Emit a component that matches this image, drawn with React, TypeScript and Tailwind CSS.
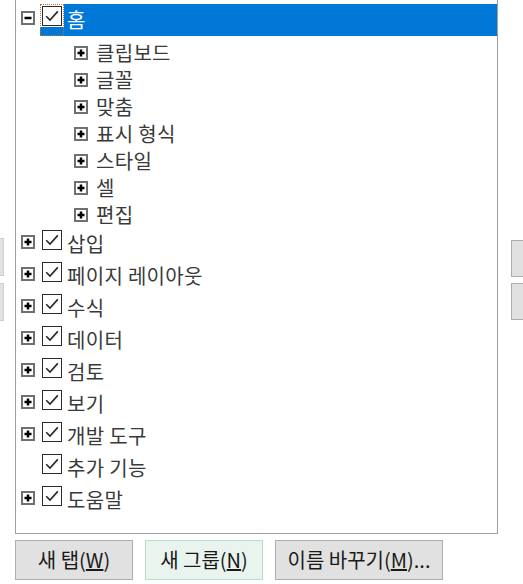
import React from "react";

const FONT = { fontFamily: '"Noto Sans CJK KR", "Noto Sans", sans-serif' };

const Expander = ({ minus }: { minus?: boolean }) => (
  <svg width="14" height="14" viewBox="0 0 14 14" className="shrink-0 block">
    <rect x="1" y="1" width="12" height="12" fill="#fff" stroke="#707070" strokeWidth="2" />
    <rect x="3.5" y="5.75" width="7" height="2.5" fill="#000" />
    {!minus && <rect x="5.75" y="3.5" width="2.5" height="7" fill="#000" />}
  </svg>
);

const Check = () => (
  <svg width="20" height="20" viewBox="0 0 20 20" className="block">
    <rect x="0.5" y="0.5" width="19" height="19" fill="#fff" stroke="#2b2b2b" />
    <path d="M4.2 10.2 L8 14 L15.8 5.4" fill="none" stroke="#262626" strokeWidth="1.6" />
  </svg>
);

const TopRow = ({ label, exp = true }: { label: string; exp?: boolean }) => (
  <div className="flex h-[32px]">
    <div className="w-[24px] pl-[5px] pt-[7px]">{exp && <Expander />}</div>
    <div className="w-[24px] pl-[2px] pt-[2px]">
      <Check />
    </div>
    <div className="pl-[3px] flex items-center text-[20px] text-[#3a3a3a] leading-none tracking-[0.3px]">{label}</div>
  </div>
);

const ChildRow = ({ label }: { label: string }) => (
  <div className="flex items-center h-[27px] pl-[58px]">
    <Expander />
    <span className="ml-[8px] text-[20px] text-[#3a3a3a] leading-none tracking-[0.3px]">{label}</span>
  </div>
);

const children = ["클립보드", "글꼴", "맞춤", "표시 형식", "스타일", "셀", "편집"];
const tops: [string, boolean][] = [
  ["삽입", true],
  ["페이지 레이아웃", true],
  ["수식", true],
  ["데이터", true],
  ["검토", true],
  ["보기", true],
  ["개발 도구", true],
  ["추가 기능", false],
  ["도움말", true],
];

export default function App() {
  return (
    <div className="w-[523px] h-[584px] bg-white overflow-hidden flex flex-col" style={FONT}>
      <div className="flex h-[534px]">
        <div className="w-[15px] flex flex-col pt-[238px]">
          <div className="w-[4px] h-[38px] bg-[#e1e1e1] border-y border-r border-[#cfcfcf]" />
          <div className="w-[4px] h-[38px] mt-[7px] bg-[#e1e1e1] border-y border-r border-[#cfcfcf]" />
        </div>
        <div className="w-[483px] h-[534px] border-l border-r border-b border-[#a0a0a0] bg-white pt-[4px]">
          <div className="flex h-[32px]">
            <div className="w-[24px] pl-[5px] pt-[7px]">
              <Expander minus />
            </div>
            <div className="flex-1 flex bg-[#0078d7]">
              <div className="w-[24px] h-[32px] flex flex-col outline-1 outline-dotted outline-[#b8733a] -outline-offset-1">
                <div className="h-[23px] bg-white pl-[2px] pt-[2px]">
                  <Check />
                </div>
              </div>
              <div className="pl-[3px] flex items-center text-[20px] text-white leading-none">홈</div>
            </div>
          </div>
          <div className="mt-[3px]">
            {children.map((c) => (
              <ChildRow key={c} label={c} />
            ))}
          </div>
          {tops.map(([l, e]) => (
            <TopRow key={l} label={l} exp={e} />
          ))}
        </div>
        <div className="flex-1 flex flex-col pl-[13px] pt-[240px]">
          <div className="h-[37px] bg-[#e1e1e1] border-y border-l border-[#adadad]" />
          <div className="h-[37px] mt-[6px] bg-[#e1e1e1] border-y border-l border-[#adadad]" />
        </div>
      </div>
      <div className="flex pl-[15px] pt-[6px] gap-[12px]">
        <button className="w-[118px] h-[40px] bg-[#e1e1e1] border border-[#adadad] text-[20px] text-[#1a1a1a] leading-none flex items-center justify-center">
          새 탭(<u>W</u>)
        </button>
        <button className="w-[118px] h-[40px] bg-[#e9f4ee] border border-[#b9dcc7] text-[20px] text-[#1a1a1a] leading-none flex items-center justify-center">
          새 그룹(<u>N</u>)
        </button>
        <button className="w-[168px] h-[40px] bg-[#e1e1e1] border border-[#adadad] text-[20px] text-[#1a1a1a] leading-none flex items-center justify-center">
          이름 바꾸기(<u>M</u>)...
        </button>
      </div>
    </div>
  );
}
